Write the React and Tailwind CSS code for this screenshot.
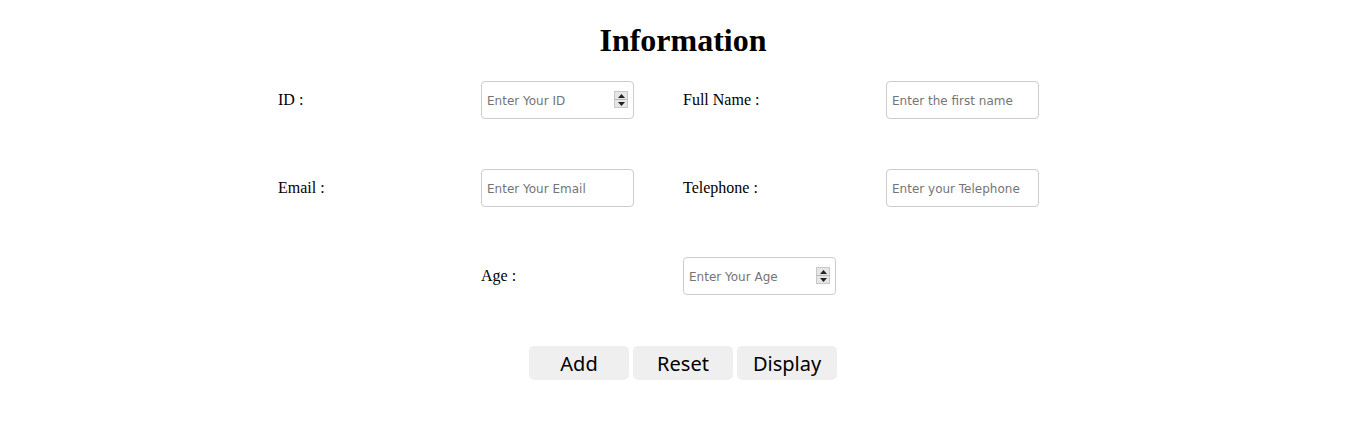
import React from "react";

function Spinner() {
  return (
    <div className="absolute right-[6px] top-[10px] w-[14px] h-[17px] flex flex-col border border-[#c8c8c8] bg-[#e6e6e6]">
      <div className="flex-1 flex items-center justify-center border-b border-[#b8b8b8]">
        <svg width="7" height="4" viewBox="0 0 7 4"><path d="M0 4 L3.5 0 L7 4 Z" fill="#222" /></svg>
      </div>
      <div className="flex-1 flex items-center justify-center">
        <svg width="7" height="4" viewBox="0 0 7 4"><path d="M0 0 L3.5 4 L7 0 Z" fill="#222" /></svg>
      </div>
    </div>
  );
}

function Field({ placeholder, spin }) {
  return (
    <div className="relative w-[153px] h-[38px]">
      <input
        type="text"
        placeholder={placeholder}
        className="w-full h-full border border-[#cccccc] rounded-[4px] pl-[5px] pr-[5px] pt-[2px] text-[12px] text-black placeholder:text-[#757575] bg-white outline-none"
        style={{ fontFamily: '"DejaVu Sans", Verdana, sans-serif' }}
      />
      {spin && <Spinner />}
    </div>
  );
}

function Label({ children }) {
  return (
    <div className="h-[38px] flex items-center text-[16px] text-black" style={{ fontFamily: '"Liberation Serif", "Times New Roman", serif' }}>
      {children}
    </div>
  );
}

export default function App() {
  return (
    <div className="w-full min-h-[437px] bg-white" style={{ fontFamily: '"Liberation Serif", serif' }}>
      <h1 className="pt-[22px] text-center text-[32px] leading-[37px] font-bold text-black">Information</h1>
      <div className="mx-auto mt-[22px] w-[810px] grid grid-cols-[203px_202px_203px_202px] gap-y-[50px]">
        <Label>ID :</Label>
        <Field placeholder="Enter Your ID" spin />
        <Label>Full Name :</Label>
        <Field placeholder="Enter the first name" />

        <Label>Email :</Label>
        <Field placeholder="Enter Your Email" />
        <Label>Telephone :</Label>
        <Field placeholder="Enter your Telephone" />

        <div />
        <Label>Age :</Label>
        <Field placeholder="Enter Your Age" spin />
        <div />
      </div>
      <div className="mt-[51px] flex justify-center gap-[4px]" style={{ fontFamily: '"Noto Sans", "Open Sans", sans-serif' }}>
        {["Add", "Reset", "Display"].map((t) => (
          <button key={t} className="w-[100px] h-[34px] rounded-[5px] bg-[#efefef] pt-[1px] text-[20px] leading-none text-black">
            {t}
          </button>
        ))}
      </div>
    </div>
  );
}
